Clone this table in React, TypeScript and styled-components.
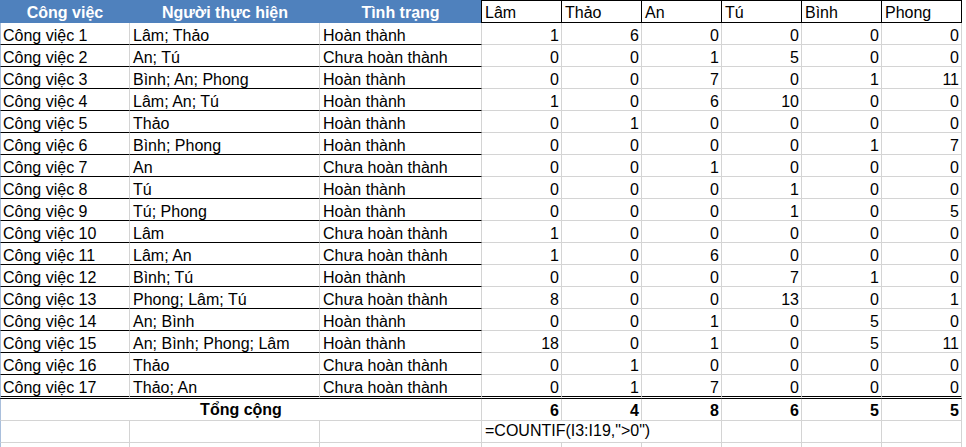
import React from 'react';
import styled, { createGlobalStyle } from 'styled-components';

const Global = createGlobalStyle`
  html, body { margin: 0; padding: 0; background: #fff; }
  body {
    font-family: "Liberation Sans", Arial, sans-serif;
    font-size: 16px;
    color: #000;
  }
`;

const GRID = '#d4d4d4';
const EDGE = '#a9bfdc';

type Align = 'left' | 'center' | 'right';
type Line = 'black' | 'gray' | 'double';

const Sheet = styled.div`
  display: grid;
  grid-template-columns: 130px 190px 162px repeat(6, 80px);
  width: 962px;
`;

const HeadCell = styled.div<{ $boxEdge?: boolean }>`
  box-sizing: border-box;
  height: 23px;
  display: flex;
  align-items: flex-end;
  justify-content: center;
  padding: 0 0 2px;
  line-height: 17px;
  background: #4f81bd;
  color: #fff;
  font-weight: 700;
  white-space: nowrap;
  border-right: ${p => (p.$boxEdge ? '1px solid #000' : 'none')};
`;

const BoxHead = styled.div`
  box-sizing: border-box;
  height: 23px;
  display: flex;
  align-items: flex-end;
  padding: 0 2px 1px 3px;
  line-height: 17px;
  white-space: nowrap;
  border-top: 1px solid #000;
  border-bottom: 1px solid #000;
  border-right: 1px solid #000;
`;

const Cell = styled.div<{
  $align?: Align;
  $bold?: boolean;
  $bottom?: Line;
  $noRight?: boolean;
  $span?: number;
  $edge?: boolean;
  $pb?: number;
}>`
  box-sizing: border-box;
  height: ${p => (p.$bottom === 'double' ? 24 : 22)}px;
  display: flex;
  align-items: flex-end;
  justify-content: ${p =>
    p.$align === 'right' ? 'flex-end' : p.$align === 'center' ? 'center' : 'flex-start'};
  padding: 0 2px ${p => p.$pb ?? 0}px ${p => (p.$edge ? 2 : 3)}px;
  line-height: 17px;
  white-space: nowrap;
  font-weight: ${p => (p.$bold ? 700 : 400)};
  grid-column: span ${p => p.$span ?? 1};
  border-left: ${p => (p.$edge ? `1px solid ${EDGE}` : 'none')};
  border-right: ${p => (p.$noRight ? 'none' : `1px solid ${GRID}`)};
  border-bottom: ${p =>
    p.$bottom === 'double'
      ? '3px double #000'
      : p.$bottom === 'black'
      ? '1px solid #000'
      : `1px solid ${GRID}`};
`;

const people = ['Lâm', 'Thảo', 'An', 'Tú', 'Bình', 'Phong'];

const rows: [string, string, number[]][] = [
  ['Lâm; Thảo', 'Hoàn thành', [1, 6, 0, 0, 0, 0]],
  ['An; Tú', 'Chưa hoàn thành', [0, 0, 1, 5, 0, 0]],
  ['Bình; An; Phong', 'Hoàn thành', [0, 0, 7, 0, 1, 11]],
  ['Lâm; An; Tú', 'Hoàn thành', [1, 0, 6, 10, 0, 0]],
  ['Thảo', 'Hoàn thành', [0, 1, 0, 0, 0, 0]],
  ['Bình; Phong', 'Hoàn thành', [0, 0, 0, 0, 1, 7]],
  ['An', 'Chưa hoàn thành', [0, 0, 1, 0, 0, 0]],
  ['Tú', 'Hoàn thành', [0, 0, 0, 1, 0, 0]],
  ['Tú; Phong', 'Hoàn thành', [0, 0, 0, 1, 0, 5]],
  ['Lâm', 'Chưa hoàn thành', [1, 0, 0, 0, 0, 0]],
  ['Lâm; An', 'Chưa hoàn thành', [1, 0, 6, 0, 0, 0]],
  ['Bình; Tú', 'Hoàn thành', [0, 0, 0, 7, 1, 0]],
  ['Phong; Lâm; Tú', 'Chưa hoàn thành', [8, 0, 0, 13, 0, 1]],
  ['An; Bình', 'Hoàn thành', [0, 0, 1, 0, 5, 0]],
  ['An; Bình; Phong; Lâm', 'Hoàn thành', [18, 0, 1, 0, 5, 11]],
  ['Thảo', 'Chưa hoàn thành', [0, 1, 0, 0, 0, 0]],
  ['Thảo; An', 'Chưa hoàn thành', [0, 1, 7, 0, 0, 0]],
];

const totals = [6, 4, 8, 6, 5, 5];

export default function App() {
  return (
    <>
      <Global />
      <Sheet>
        <HeadCell>Công việc</HeadCell>
        <HeadCell>Người thực hiện</HeadCell>
        <HeadCell $boxEdge>Tình trạng</HeadCell>
        {people.map(p => (
          <BoxHead key={p}>{p}</BoxHead>
        ))}

        {rows.map(([who, status, nums], i) => {
          const last = i === rows.length - 1;
          const leftLine: Line = last ? 'double' : 'black';
          const rightLine: Line = last ? 'double' : 'gray';
          return (
            <React.Fragment key={i}>
              <Cell $edge $bottom={leftLine}>Công việc {i + 1}</Cell>
              <Cell $bottom={leftLine}>{who}</Cell>
              <Cell $bottom={leftLine}>{status}</Cell>
              {nums.map((n, j) => (
                <Cell key={j} $align="right" $bottom={rightLine}>
                  {n}
                </Cell>
              ))}
            </React.Fragment>
          );
        })}

        <Cell $edge $span={3} $align="center" $bold $pb={2}>
          Tổng cộng
        </Cell>
        {totals.map((t, j) => (
          <Cell key={j} $align="right" $bold $pb={1}>
            {t}
          </Cell>
        ))}

        <Cell $edge />
        <Cell />
        <Cell />
        <Cell $span={3} $pb={3}>=COUNTIF(I3:I19,"&gt;0")</Cell>
        <Cell />
        <Cell />
        <Cell />

        {Array.from({ length: 9 }).map((_, j) => (
          <Cell key={j} $edge={j === 0} />
        ))}
      </Sheet>
    </>
  );
}
